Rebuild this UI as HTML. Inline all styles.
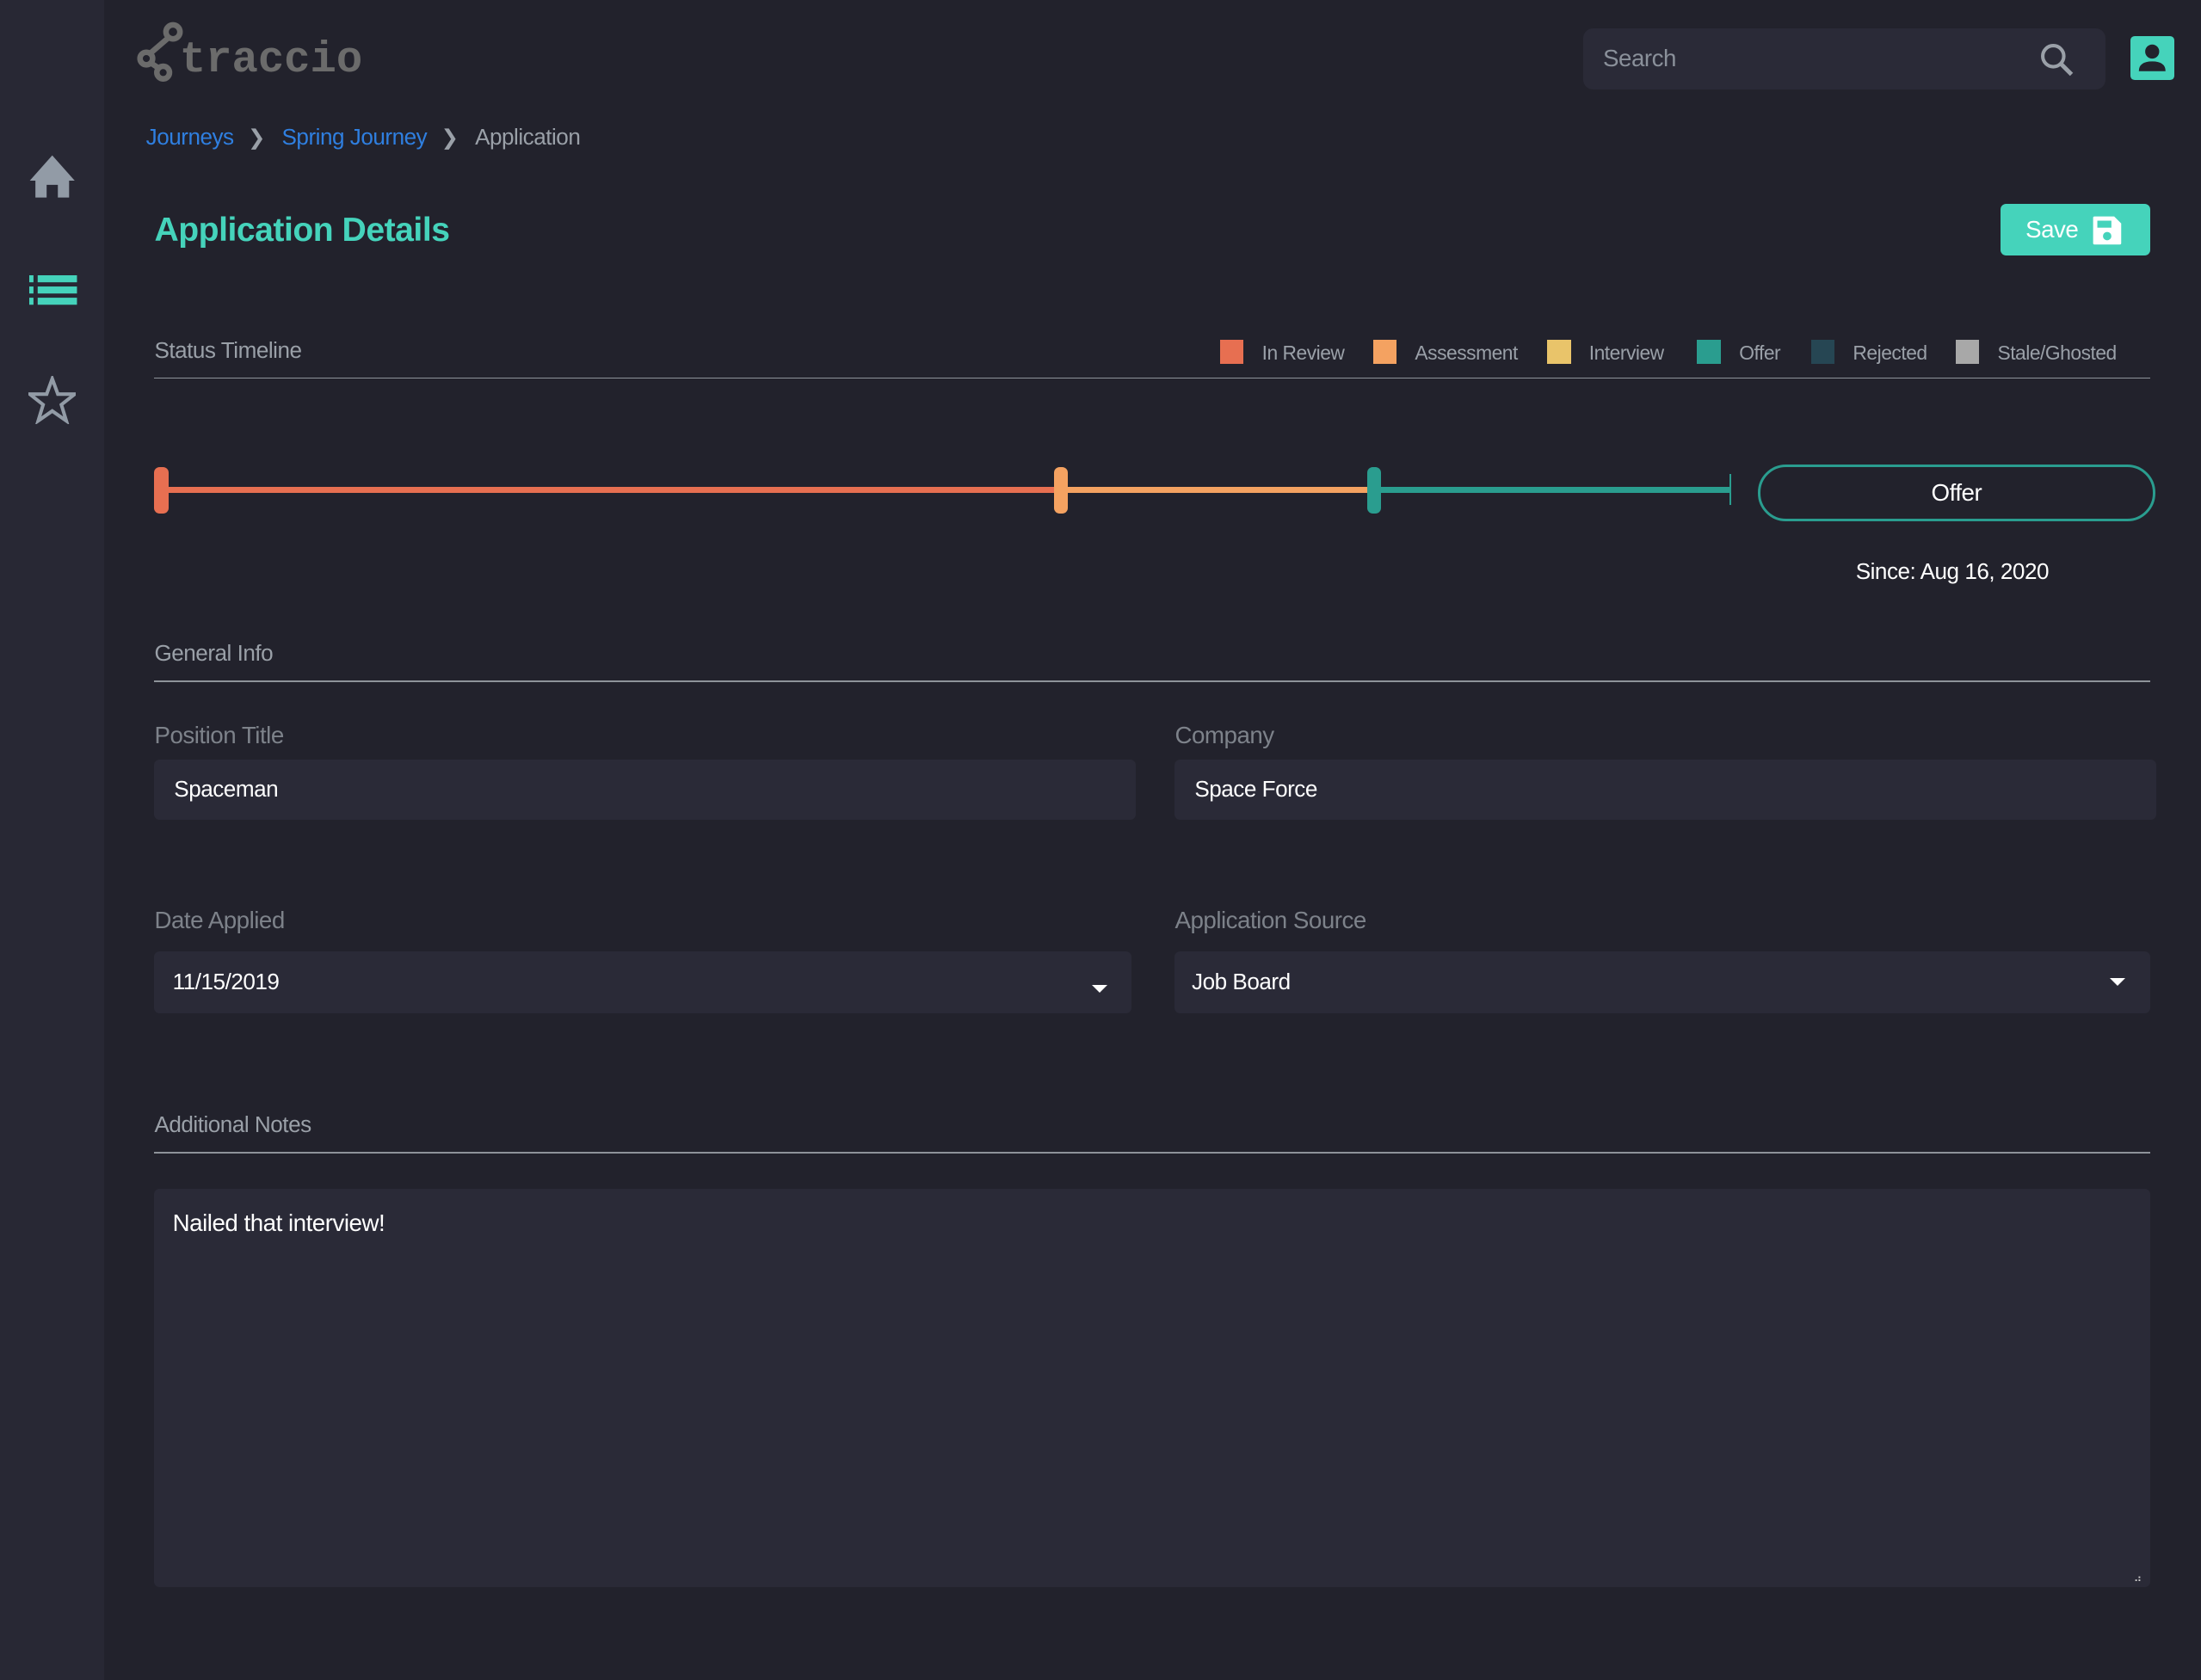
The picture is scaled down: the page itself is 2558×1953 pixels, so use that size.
<!DOCTYPE html>
<html><head><meta charset="utf-8"><style>
html,body{margin:0;padding:0;background:#22222c;}
body{width:1568px;height:1197px;zoom:1.6314;position:relative;overflow:hidden;font-family:"Liberation Sans",sans-serif;color:#fff;letter-spacing:-0.3px;}
.abs{position:absolute;}
.side{left:0;top:0;width:74px;height:1197px;background:#282834;}
.lbl{color:#9aa0a8;font-size:16px;}
.hr{height:1px;background:#8e939a;left:110px;width:1422px;}
.inp{background:#2a2a37;border-radius:4px;}
.leg{position:absolute;top:242px;font-size:14px;color:#9aa0a8;}
.sq{display:inline-block;width:17px;height:17px;vertical-align:-3px;margin-right:13px;}
.chev{display:inline-block;font-size:15px;margin:0 12px 0 10px;color:#9aa0a8;}
</style></head><body>
<div class="abs side"></div>
<svg class="abs" style="left:20px;top:110px" width="34" height="32" viewBox="0 0 34 32"><path d="M17 1 L33 19 L29 19 L29 31 L21 31 L21 22 L13 22 L13 31 L5 31 L5 19 L1 19 Z" fill="#929ba6"/></svg>
<svg class="abs" style="left:21px;top:196px" width="34" height="22" viewBox="0 0 34 22"><g fill="#45d3bb"><rect x="0" y="0" width="3" height="5"/><rect x="6" y="0" width="28" height="5"/><rect x="0" y="8" width="3" height="5"/><rect x="6" y="8" width="28" height="5"/><rect x="0" y="16" width="3" height="5"/><rect x="6" y="16" width="28" height="5"/></g></svg>
<svg class="abs" style="left:20px;top:268px" width="34" height="34" viewBox="0 0 34 34"><path d="M17 2 L21 13 L33 13 L23.5 20.5 L27 32 L17 25 L7 32 L10.5 20.5 L1 13 L13 13 Z" fill="none" stroke="#929ba6" stroke-width="2.5"/></svg>
<svg class="abs" style="left:96px;top:15px" width="36" height="44" viewBox="0 0 36 44"><g fill="none" stroke="#6b6b6b" stroke-width="4"><circle cx="27" cy="8" r="5"/><circle cx="8" cy="27" r="4.5"/><circle cx="20" cy="37" r="4.5"/><line x1="24" y1="12" x2="10" y2="24"/><line x1="11" y1="30" x2="17" y2="34"/></g></svg>
<div class="abs" style="left:128px;top:26px;font-family:'Liberation Mono',monospace;font-size:31px;font-weight:bold;color:#6b6b6b;letter-spacing:0">traccio</div>
<div class="abs inp" style="left:1128px;top:20px;width:372px;height:44px;border-radius:7px;"></div>
<div class="abs" style="left:1142px;top:32px;font-size:17px;color:#8a909a">Search</div>
<svg class="abs" style="left:1453px;top:30px" width="26" height="26" viewBox="0 0 26 26"><circle cx="10" cy="10" r="7.5" fill="none" stroke="#9aa0a8" stroke-width="2.5"/><line x1="15.5" y1="15.5" x2="23" y2="23" stroke="#9aa0a8" stroke-width="3"/></svg>
<div class="abs" style="left:1518px;top:26px;width:31px;height:31px;background:#45d3bb;border-radius:3px"></div>
<svg class="abs" style="left:1518px;top:26px" width="31" height="31" viewBox="0 0 31 31"><circle cx="15.5" cy="11" r="5" fill="#22222c"/><path d="M6 25 Q6 18 15.5 18 Q25 18 25 25 Z" fill="#22222c"/></svg>
<div class="abs" style="left:104px;top:88px;font-size:16px;color:#9aa0a8;letter-spacing:-0.3px"><span style="color:#2f7fe0">Journeys</span><span class="chev">&#x276F;</span><span style="color:#2f7fe0">Spring Journey</span><span class="chev">&#x276F;</span>Application</div>
<div class="abs" style="left:110px;top:151px;font-size:24px;font-weight:bold;color:#45d3bb;letter-spacing:-0.3px">Application Details</div>
<div class="abs" style="left:1425px;top:145px;width:107px;height:37px;background:#45d3bb;border-radius:4px"></div>
<div class="abs" style="left:1443px;top:154px;font-size:17px;color:#fff">Save</div>
<svg class="abs" style="left:1490px;top:153px" width="22" height="22" viewBox="0 0 22 22"><path d="M1 2 Q1 1 2 1 L16 1 L21 6 L21 20 Q21 21 20 21 L2 21 Q1 21 1 20 Z" fill="#fff"/><rect x="4" y="4" width="10" height="5" fill="#45d3bb"/><circle cx="11" cy="15" r="3" fill="#45d3bb"/></svg>
<div class="abs lbl" style="left:110px;top:240px">Status Timeline</div>
<div class="leg" style="left:869px"><span class="sq" style="background:#e76f51"></span>In Review</div>
<div class="leg" style="left:978px"><span class="sq" style="background:#f4a261"></span>Assessment</div>
<div class="leg" style="left:1102px"><span class="sq" style="background:#e9c46a"></span>Interview</div>
<div class="leg" style="left:1209px"><span class="sq" style="background:#2a9d8f"></span>Offer</div>
<div class="leg" style="left:1290px"><span class="sq" style="background:#264653"></span>Rejected</div>
<div class="leg" style="left:1393px"><span class="sq" style="background:#a8a8a8"></span>Stale/Ghosted</div>
<div class="abs hr" style="top:269px"></div>
<div class="abs" style="left:115px;top:347px;width:641px;height:4px;background:#e76f51"></div>
<div class="abs" style="left:756px;top:347px;width:223px;height:4px;background:#f4a261"></div>
<div class="abs" style="left:979px;top:347px;width:254px;height:4px;background:#2a9d8f"></div>
<div class="abs" style="left:1232px;top:338px;width:1px;height:22px;background:#2a9d8f"></div>
<div class="abs" style="left:110px;top:333px;width:10px;height:33px;background:#e76f51;border-radius:4px"></div>
<div class="abs" style="left:751px;top:333px;width:10px;height:33px;background:#f4a261;border-radius:4px"></div>
<div class="abs" style="left:974px;top:333px;width:10px;height:33px;background:#2a9d8f;border-radius:4px"></div>
<div class="abs" style="left:1252px;top:331px;width:280px;height:37px;border:2px solid #2a9d8f;border-radius:20px;text-align:center;line-height:37px;font-size:17px">Offer</div>
<div class="abs" style="left:1322px;top:398px;font-size:16px;letter-spacing:-0.3px">Since: Aug 16, 2020</div>
<div class="abs lbl" style="left:110px;top:456px">General Info</div>
<div class="abs hr" style="top:485px"></div>
<div class="abs lbl" style="left:110px;top:514px;font-size:17px;color:#7d828a">Position Title</div>
<div class="abs lbl" style="left:837px;top:514px;font-size:17px;color:#7d828a">Company</div>
<div class="abs inp" style="left:110px;top:541px;width:699px;height:43px"></div>
<div class="abs inp" style="left:837px;top:541px;width:699px;height:43px"></div>
<div class="abs" style="left:124px;top:553px;font-size:16px">Spaceman</div>
<div class="abs" style="left:851px;top:553px;font-size:16px">Space Force</div>
<div class="abs lbl" style="left:110px;top:646px;font-size:17px;color:#7d828a">Date Applied</div>
<div class="abs lbl" style="left:837px;top:646px;font-size:17px;color:#7d828a">Application Source</div>
<div class="abs inp" style="left:110px;top:678px;width:696px;height:44px"></div>
<div class="abs inp" style="left:837px;top:678px;width:695px;height:44px"></div>
<div class="abs" style="left:123px;top:690px;font-size:16px">11/15/2019</div>
<div class="abs" style="left:849px;top:690px;font-size:16px">Job Board</div>
<div class="abs" style="left:778px;top:702px;border-left:6px solid transparent;border-right:6px solid transparent;border-top:6px solid #fff"></div>
<div class="abs" style="left:1503px;top:697px;border-left:6px solid transparent;border-right:6px solid transparent;border-top:6px solid #fff"></div>
<div class="abs lbl" style="left:110px;top:792px">Additional Notes</div>
<div class="abs hr" style="top:821px"></div>
<div class="abs inp" style="left:110px;top:847px;width:1422px;height:284px"></div>
<div class="abs" style="left:123px;top:862px;font-size:17px">Nailed that interview!</div>
<div class="abs" style="left:1520px;top:1120px;font-size:8px;color:#ccc">⠴</div>
</body></html>
